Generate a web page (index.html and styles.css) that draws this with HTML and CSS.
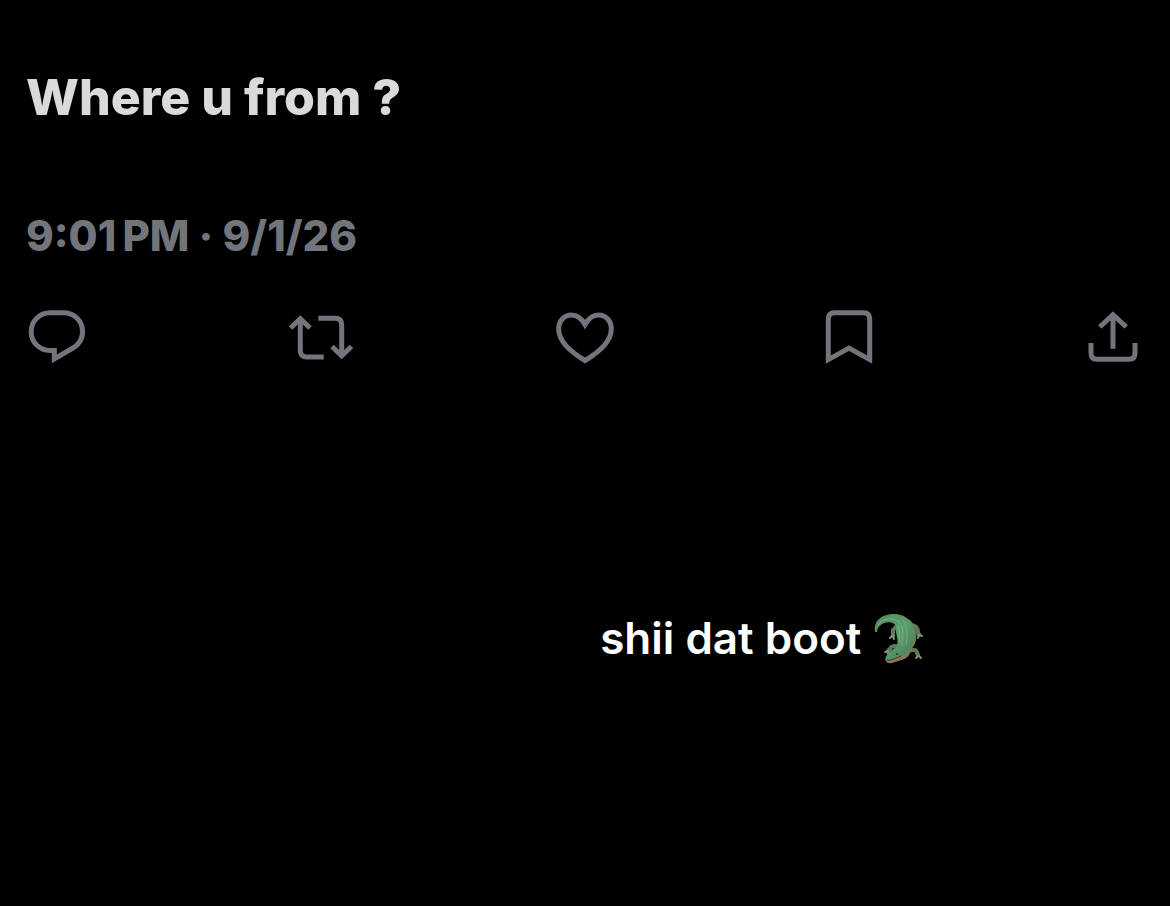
FILE: index.html
```html
<!DOCTYPE html>
<html lang="en">
<head>
    <meta charset="UTF-8">
    <meta name="viewport" content="width=device-width, initial-scale=1.0">
    <title>Post</title>
    <link rel="stylesheet" href="styles.css">
</head>
<body>
    <main class="post">
        <h1 class="post-text">Where u from ?</h1>
        <p class="post-date"><time>9:01&#8201;PM</time> · <time>9/1/26</time></p>

        <div class="actions">
            <button type="button" aria-label="Reply">
                <svg viewBox="0 0 80 80"><path d="M37.3 53.5H33A18.8 18.8 0 0 1 33 15.8H47A18.8 18.8 0 0 1 56 51L37.3 62Z"/></svg>
            </button>
            <button type="button" aria-label="Repost">
                <svg viewBox="0 0 80 80"><path d="M9.5 31L19.3 21.8L29 31M19.3 22V53.5Q19.3 60 26 60H42.7M37.3 21.3H54Q60.7 21.3 60.7 28V58M51 49.5L60.7 58.8L70.5 49.5"/></svg>
            </button>
            <button type="button" aria-label="Like">
                <svg viewBox="0 0 80 80"><path d="M40 27.5C36 20.5 31.5 18 26.5 18C19 18 13.7 24 13.7 32C13.7 44 24 54 40 63.5C56 54 66.3 44 66.3 32C66.3 24 61 18 53.5 18C48.5 18 44 20.5 40 27.5Z"/></svg>
            </button>
            <button type="button" aria-label="Bookmark">
                <svg viewBox="0 0 80 80"><path d="M19.3 62.6V22Q19.3 15.7 25.5 15.7H54.5Q60.7 15.7 60.7 22V62.6L40 51Z"/></svg>
            </button>
            <button type="button" aria-label="Share">
                <svg viewBox="0 0 80 80"><path d="M26.8 30L40 17.6L53.2 30M40 18V51.7M18 46V56Q18 62.3 24 62.3H56Q62 62.3 62 56V46"/></svg>
            </button>
        </div>

        <p class="caption">
            <span>shii dat boot</span>
            <svg class="croc" viewBox="0 0 66 66" role="img" aria-label="crocodile">
                <defs>
                    <linearGradient id="skin" x1="0" y1="0" x2="1" y2="1">
                        <stop offset="0" stop-color="#568a60"/>
                        <stop offset="0.5" stop-color="#5a9c6c"/>
                        <stop offset="1" stop-color="#477b54"/>
                    </linearGradient>
                </defs>
                <!-- legs -->
                <g class="leg">
                    <path d="M32 21L28 25V31M47 20C51 21 53 24 53 27L54 30"/>
                    <path d="M34 42C29 40 26 41 25 44L23 46M44 46C49 44 52 45 52 48L53 50"/>
                    <path class="claw" d="M27 31L25 33M28 31L29 34M54 30L53 33M55 30L57 31M23 46L20 47M23 46L23 49M53 51L51 53M54 51L56 53"/>
                </g>
                <!-- belly -->
                <path fill="#6f7f58" d="M44 14C52 21 54 34 48 42C44 46 46 52 39 54L30 57L35 43Z"/>
                <!-- tail, back and head -->
                <path fill="url(#skin)" d="M10 27C8 15 18 9 29 9C42 9 49 18 50 29C50 38 43 43 42 48C39 54 30 55 25 57C20 58 19 54 22 50C24 46 30 44 32 40C34 34 30 29 31 23C31 18 25 16 19 18C15 20 12 23 12 27Z"/>
                <path class="ridge" d="M13 20C18 13 28 12 34 17C40 23 37 33 37 41M38 15C44 23 42 33 41 40M33 20C35 27 35 32 34 38"/>
                <!-- jaw -->
                <path fill="#8c7660" d="M21 55C26 56 32 52 39 50L43 48C43 53 37 55 32 56C28 58 22 60 21 55Z"/>
                <path class="mouth" d="M22 55C27 56 31 53 36 51"/>
                <circle cx="32" cy="49" r="1" fill="#203d2a"/>
            </svg>
        </p>
    </main>
</body>
</html>
```
FILE: styles.css
```css
* {
    box-sizing: border-box;
}
body {
    background: #000;
    margin: 0;
    font-family: Inter, "Liberation Sans", sans-serif;
    color: #dadada;
}
.post {
    min-height: 100vh;
    padding-top: 67px;
}
.post-text {
    font-size: 50px;
    line-height: 60px;
    font-weight: 800;
    margin: 0 26px;
}
.post-date {
    font-size: 42px;
    line-height: 52px;
    font-weight: 800;
    color: #72757c;
    margin: 83px 26px 0;
}
.actions {
    display: flex;
    justify-content: space-between;
    margin-top: 35px;
    padding: 0 17px;
}
.actions button {
    width: 80px;
    height: 80px;
    padding: 0;
    border: none;
    background: none;
    color: #72757c;
    cursor: pointer;
}
.actions svg {
    display: block;
    width: 100%;
    fill: none;
    stroke: currentColor;
    stroke-width: 5;
}
.caption {
    display: flex;
    align-items: center;
    gap: 4px;
    width: fit-content;
    margin: 228px 20.4% 0 auto;
    font-size: 44px;
    line-height: 66px;
    font-weight: 600;
    color: #fff;
}
.croc {
    width: 66px;
    height: 66px;
}
.leg path {
    fill: none;
    stroke: #64775a;
    stroke-width: 4;
    stroke-linecap: round;
}
.leg .claw {
    stroke: #7a9672;
    stroke-width: 2;
}
.ridge {
    fill: none;
    stroke: #72b37e;
    stroke-width: 1;
}
.mouth {
    fill: none;
    stroke: #44262a;
    stroke-width: 1;
}
```
